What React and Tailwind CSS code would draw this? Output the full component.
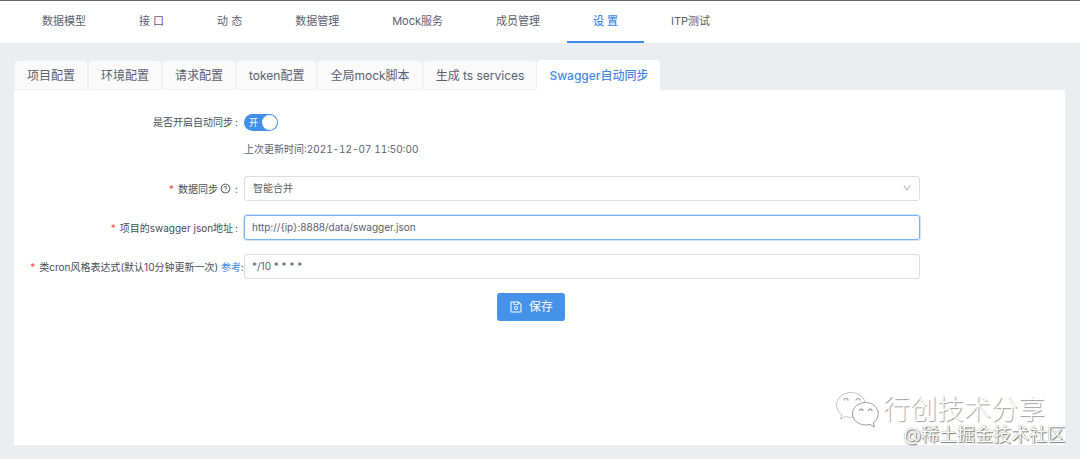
import { useState } from 'react';
import { AiOutlineDown, AiOutlineQuestionCircle, AiOutlineSave } from 'react-icons/ai';

const navItems = ['数据模型', '接 口', '动 态', '数据管理', 'Mock服务', '成员管理', '设 置', 'ITP测试'];

const tabs = [
  '项目配置',
  '环境配置',
  '请求配置',
  'token配置',
  '全局mock脚本',
  '生成 ts services',
  'Swagger自动同步',
];

const FormRow = ({ label, htmlFor, required, tight, extra, children }) => (
  <div className="flex items-center mb-[14px]">
    <div
      className={
        tight
          ? 'w-[230px] shrink-0 flex items-center justify-end whitespace-nowrap text-[#474d57]'
          : 'w-[230px] shrink-0 flex items-center justify-end pr-[6px] whitespace-nowrap text-[#474d57]'
      }
    >
      {required && <span className="text-[#f5503c] mr-1">*</span>}
      <label htmlFor={htmlFor}>{label}</label>
      {extra}
      <span className={tight ? '' : 'ml-[2px]'}>:</span>
    </div>
    <div className="relative flex-1 min-w-0">{children}</div>
  </div>
);

const Watermark = () => (
  <div className="absolute right-[15px] bottom-[14px] flex flex-col items-end pointer-events-none text-white">
    <div className="flex items-center gap-[4px] mr-[20px]">
      <svg width="44" height="38" viewBox="0 0 44 38" fill="#fff" stroke="#9a9a9a" strokeLinejoin="round">
        <path
          d="M16 1.500C8 1.500 1.500 7 1.500 14c0 4 2 7.300 5.500 9.700L5.500 28l5.200-2.500c1.800.5 3.500.8 5.300.8 8 0 14.500-5.500 14.500-12.300S24 1.500 16 1.500z"
          stroke="#b5b5b5"
          strokeWidth="0.8"
        />
        <path
          d="M30.500 11.500c-7.300 0-13 5-13 11.200s5.700 11.300 13 11.300c1.500 0 3-.2 4.400-.6l4.600 2.600-1.300-4.200c3.300-2.300 5-5.500 5-9.100 0-6.200-5.600-11.200-12.700-11.200z"
          strokeWidth="1"
        />
        <path
          d="M9 9.500a2 2 0 0 1 4 0M21 9.500a2 2 0 0 1 4 0M24.500 20a1.800 1.800 0 0 1 3.600 0M33.500 20a1.800 1.800 0 0 1 3.600 0"
          fill="none"
          strokeWidth="1.2"
        />
      </svg>
      <span className="text-[27px] leading-[32px] font-light [text-shadow:1px_1px_1px_#999]">
        行创技术分享
      </span>
    </div>
    <span className="-mt-[4px] text-[18px] leading-[20px] [text-shadow:0_0_1px_#777,1px_1px_1px_#777]">
      @稀土掘金技术社区
    </span>
  </div>
);

const App = () => {
  const [activeTab, setActiveTab] = useState('Swagger自动同步');
  const [enabled, setEnabled] = useState(true);
  const [url, setUrl] = useState('http://{ip}:8888/data/swagger.json');
  const [cron, setCron] = useState('*/10 * * * *');

  return (
    <div className="relative min-h-screen flex flex-col bg-[#ebedf0] text-[#596070] font-[Inter,'Noto_Sans_CJK_SC',sans-serif]">
      <nav className="flex gap-px h-[43px] pl-4 bg-white border-t border-[#666]">
        {navItems.map((item) => (
          <a
            key={item}
            href="#"
            className={
              item === '设 置'
                ? 'px-[26px] flex items-center text-[11px] font-medium whitespace-nowrap text-[#3f8ae8] border-b-2 border-[#3f8ae8]'
                : 'px-[26px] flex items-center text-[11px] whitespace-nowrap border-b-2 border-transparent'
            }
          >
            {item}
          </a>
        ))}
      </nav>

      <main className="flex-1 flex flex-col pl-[14px] pr-[15px] pt-[17px] pb-[14px]">
        <div role="tablist" className="flex">
          {tabs.map((tab) => (
            <button
              key={tab}
              type="button"
              role="tab"
              aria-selected={tab === activeTab}
              onClick={() => setActiveTab(tab)}
              className={
                tab === activeTab
                  ? 'h-[30px] px-[11px] pt-px text-[12px] font-medium whitespace-nowrap rounded-t-sm bg-white text-[#3f8ae8] border border-white'
                  : 'h-[30px] px-3 pt-px text-[12px] whitespace-nowrap rounded-t-sm bg-[#fafafb] border border-[#f1f1f3]'
              }
            >
              {tab}
            </button>
          ))}
        </div>

        <form
          className="flex-1 bg-white pt-6 pr-[145px] text-[10px] leading-4"
          onSubmit={(e) => e.preventDefault()}
        >
          <div className="flex items-start mb-[19px]">
            <div className="w-[230px] shrink-0 text-right pr-[6px] text-[#474d57]">
              <label htmlFor="sync">是否开启自动同步</label>
              <span className="ml-[2px]">:</span>
            </div>
            <div>
              <button
                id="sync"
                type="button"
                role="switch"
                aria-checked={enabled}
                onClick={() => setEnabled(!enabled)}
                className={
                  enabled
                    ? 'flex items-center justify-between w-[34px] h-[17px] pl-[5px] pr-px rounded-full bg-[#4090ea] text-white text-[9px]'
                    : 'flex flex-row-reverse items-center justify-between w-[34px] h-[17px] pr-[5px] pl-px rounded-full bg-gray-400 text-white text-[9px]'
                }
              >
                {enabled ? '开' : '关'}
                <span className="w-[15px] h-[15px] rounded-full bg-white" />
              </button>
              <p className="mt-[10px] tabular-nums">上次更新时间:2021-12-07 11:50:00</p>
            </div>
          </div>

          <FormRow
            label="数据同步"
            htmlFor="mode"
            required
            extra={<AiOutlineQuestionCircle size={11} className="ml-[2px] mr-[2px]" />}
          >
            <select
              id="mode"
              className="block w-full h-[25px] px-2 pb-px appearance-none bg-white border border-[#dcdee2] rounded-[3px]"
            >
              <option>智能合并</option>
              <option>普通模式</option>
              <option>完全覆盖</option>
            </select>
            <AiOutlineDown size={10} className="absolute right-2 top-[7px] text-[#999] pointer-events-none" />
          </FormRow>

          <FormRow label="项目的swagger json地址" htmlFor="url" required>
            <input
              id="url"
              type="text"
              value={url}
              onChange={(e) => setUrl(e.target.value)}
              className="block w-full h-[25px] px-[7px] pb-px border border-[#74b2f5] rounded-[3px] outline-none shadow-[0_0_0_1px_#cfe4fb]"
            />
          </FormRow>

          <FormRow
            label="类cron风格表达式(默认10分钟更新一次)"
            htmlFor="cron"
            required
            tight
            extra={
              <a href="#" className="ml-[3px] text-[#3f8ae8]">
                参考
              </a>
            }
          >
            <input
              id="cron"
              type="text"
              value={cron}
              onChange={(e) => setCron(e.target.value)}
              className="block w-full h-[25px] px-[7px] pb-px bg-white border border-[#dcdee2] rounded-[3px] outline-none"
            />
          </FormRow>

          <div className="flex justify-center pl-[128px]">
            <button
              type="submit"
              className="flex items-center gap-[6px] h-7 px-3 rounded-[3px] bg-[#4592ea] text-white text-[12px]"
            >
              <AiOutlineSave size={14} />
              保存
            </button>
          </div>
        </form>
      </main>

      <Watermark />
    </div>
  );
};

export default App;
